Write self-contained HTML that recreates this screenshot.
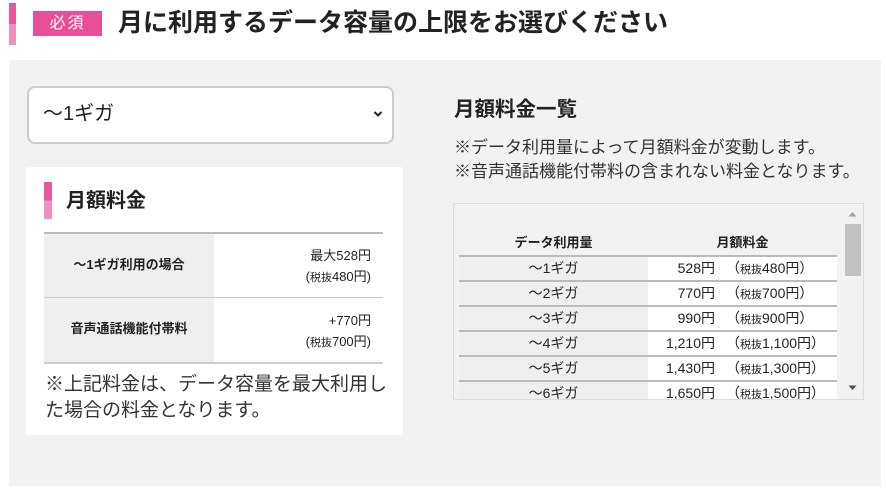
<!DOCTYPE html>
<html><head><meta charset="utf-8"><style>
*{margin:0;padding:0;box-sizing:border-box}
body{width:886px;height:495px;background:#fff;font-family:"Liberation Sans","Noto Sans CJK JP",sans-serif;color:#222;position:relative;overflow:hidden}
.a{position:absolute;white-space:nowrap}
.bar{position:absolute;background:linear-gradient(#e8579b 50%,#f090c0 50%)}
.b{font-weight:bold}
.row{position:absolute;left:459px;width:378px;height:25px;border-top:2px solid #bbb;font-size:14px}
.row .l{position:absolute;left:0;top:0;width:189px;height:23px;background:#efefef;text-align:center;line-height:23px}
.row .r{position:absolute;left:189px;top:0;width:189px;height:23px;background:#fff;line-height:23px}
.row .r .p{position:absolute;right:122px}
.row .r .t{position:absolute;left:78px}
.row small{font-size:11px}
</style></head><body>
<div class="bar" style="left:9px;top:3px;width:7px;height:42px"></div>
<div class="a" style="left:33px;top:11px;width:69px;height:25px;background:#e84f97;color:#fff;font-size:16px;line-height:25px;text-align:center;letter-spacing:2px">必須</div>
<div class="a b" style="left:118px;top:7px;font-size:25px;line-height:32px">月に利用するデータ容量の上限をお選びください</div>

<div class="a" style="left:9px;top:60px;width:872px;height:426px;background:#f2f2f2"></div>

<div class="a" style="left:27px;top:86px;width:367px;height:58px;background:#fff;border:2px solid #ccc;border-radius:8px"></div>
<div class="a" style="left:43px;top:101px;font-size:20px;line-height:26px">〜1ギガ</div>
<svg class="a" style="left:373px;top:110px" width="10" height="8" viewBox="0 0 10 8"><path d="M1.5 2 L5 5.5 L8.5 2" stroke="#222" stroke-width="2" fill="none"/></svg>

<div class="a" style="left:26px;top:167px;width:377px;height:268px;background:#fff"></div>
<div class="bar" style="left:44px;top:182px;width:8px;height:37px"></div>
<div class="a b" style="left:66px;top:187px;font-size:20px;line-height:28px">月額料金</div>
<div class="a" style="left:44px;top:232px;width:339px;height:2px;background:#bbb"></div>
<div class="a" style="left:44px;top:234px;width:170px;height:63px;background:#efefef"></div>
<div class="a" style="left:44px;top:297px;width:339px;height:1px;background:#ccc"></div>
<div class="a" style="left:44px;top:298px;width:170px;height:64px;background:#efefef"></div>
<div class="a" style="left:44px;top:362px;width:339px;height:2px;background:#ccc"></div>
<div class="a b" style="left:44px;top:256px;width:170px;text-align:center;font-size:13px;line-height:18px">〜1ギガ利用の場合</div>
<div class="a b" style="left:44px;top:320px;width:170px;text-align:center;font-size:13px;line-height:18px">音声通話機能付帯料</div>
<div class="a" style="left:250px;width:121px;top:245px;text-align:right;font-size:13px;line-height:21px">最大528円<br><span style="font-size:13px">(<small style="font-size:11px">税抜</small>480円)</span></div>
<div class="a" style="left:250px;width:121px;top:310px;text-align:right;font-size:13px;line-height:21px">+770円<br><span style="font-size:13px">(<small style="font-size:11px">税抜</small>700円)</span></div>
<div class="a" style="left:45px;top:372px;font-size:19px;line-height:26px;color:#333">※上記料金は、データ容量を最大利用し<br>た場合の料金となります。</div>

<div class="a b" style="left:454px;top:96px;font-size:20.5px;line-height:27px">月額料金一覧</div>
<div class="a" style="left:454px;top:136px;font-size:17px;line-height:24px;color:#333">※データ利用量によって月額料金が変動します。<br>※音声通話機能付帯料の含まれない料金となります。</div>

<div class="a" style="left:453px;top:203px;width:411px;height:197px;border:1px solid #ddd;background:#f2f2f2;overflow:hidden">
</div>
<div class="a b" style="left:459px;top:234px;width:189px;text-align:center;font-size:13px;line-height:18px">データ利用量</div>
<div class="a b" style="left:648px;top:234px;width:189px;text-align:center;font-size:13px;line-height:18px">月額料金</div>
<div class="row" style="top:255px"><div class="l">〜1ギガ</div><div class="r"><span class="p">528円</span><span class="t">（<small>税抜</small>480円）</span></div></div>
<div class="row" style="top:280px"><div class="l">〜2ギガ</div><div class="r"><span class="p">770円</span><span class="t">（<small>税抜</small>700円）</span></div></div>
<div class="row" style="top:305px"><div class="l">〜3ギガ</div><div class="r"><span class="p">990円</span><span class="t">（<small>税抜</small>900円）</span></div></div>
<div class="row" style="top:330px"><div class="l">〜4ギガ</div><div class="r"><span class="p">1,210円</span><span class="t">（<small>税抜</small>1,100円）</span></div></div>
<div class="row" style="top:355px"><div class="l">〜5ギガ</div><div class="r"><span class="p">1,430円</span><span class="t">（<small>税抜</small>1,300円）</span></div></div>
<div class="row" style="top:380px;height:19px;overflow:hidden"><div class="l">〜6ギガ</div><div class="r"><span class="p">1,650円</span><span class="t">（<small>税抜</small>1,500円）</span></div></div>
<svg class="a" style="left:848px;top:211px" width="9" height="6"><path d="M0.5 5.5 L4.5 1 L8.5 5.5Z" fill="#a3a3a3"/></svg>
<div class="a" style="left:845px;top:224px;width:16px;height:52px;background:#c1c1c1"></div>
<svg class="a" style="left:848px;top:385px" width="9" height="6"><path d="M0.5 0.5 L4.5 5 L8.5 0.5Z" fill="#505050"/></svg>
</body></html>
